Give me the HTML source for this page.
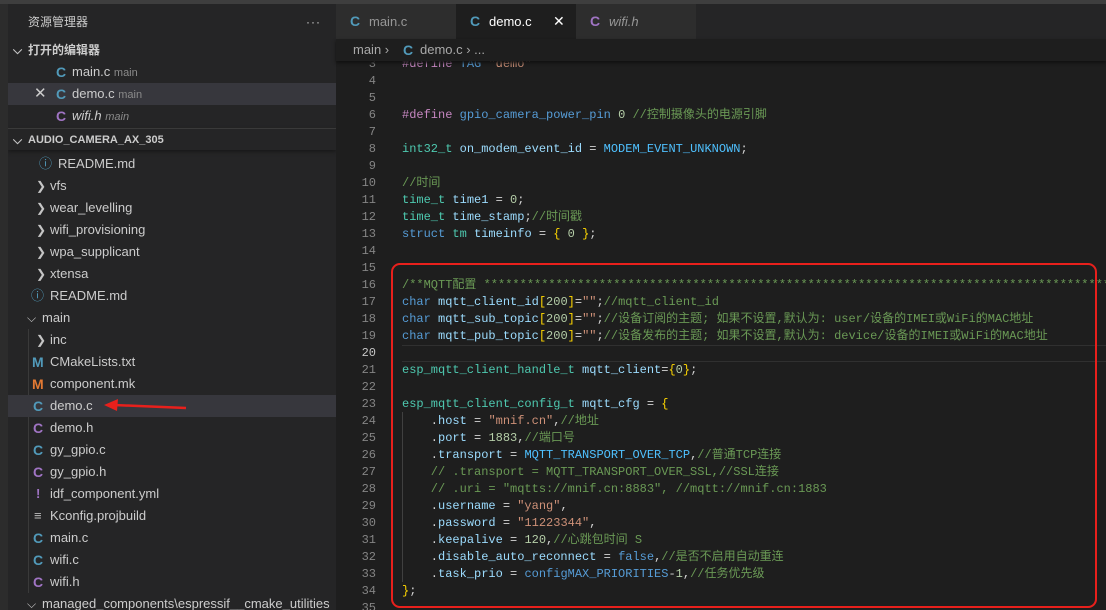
<!DOCTYPE html>
<html><head><meta charset="utf-8"><style>
*{margin:0;padding:0;box-sizing:border-box}
body{width:1106px;height:610px;overflow:hidden;background:#1e1e1e;font-family:"Liberation Sans","Noto Sans CJK SC",sans-serif;position:relative;color:#ccc}
.abs{position:absolute}
#top{left:0;top:0;width:1106px;height:4px;background:#3e3e3e}
#act{left:0;top:4px;width:8px;height:606px;background:#2c2c2c}
#side{left:8px;top:4px;width:328px;height:606px;background:#252526;overflow:hidden}
.row{position:absolute;left:0;width:328px;height:22px;line-height:22px;font-size:13px;color:#ccc;white-space:nowrap}
.row span{position:absolute}
.ci{font-weight:bold;font-size:14px;color:#519aba}
.ch{font-weight:bold;font-size:14px;color:#a074c4}
.dim{font-size:11px;color:#8b8b8b}
.chev{color:#c5c5c5;font-size:12px}
#tabs{left:336px;top:4px;width:770px;height:35px;background:#252526}
.tab{position:absolute;top:0;height:35px;width:120px;background:#2d2d2d;font-size:13px;line-height:35px;color:#969696}
.tab b{position:absolute;left:14px;font-size:14px}
.tab i,.tab em{position:absolute;left:33px}
#bc{left:336px;top:39px;width:770px;height:22px;background:#1e1e1e;box-shadow:0 2px 3px #111;z-index:2;font-size:13px;line-height:22px;color:#a9a9a9}
#code{left:336px;top:61px;width:770px;height:549px;overflow:hidden}
.l{position:absolute;left:0;height:17px;line-height:17px;font-family:"Liberation Mono","Noto Sans CJK SC",monospace;font-size:12px;white-space:pre;width:770px}
.n{position:absolute;right:730px;color:#858585;text-align:right}
.c{position:absolute;left:66px;color:#d4d4d4}
.k{color:#569cd6}.p{color:#c586c0}.t{color:#4ec9b0}.v{color:#9cdcfe}.s{color:#ce9178}.g{color:#6a9955}.num{color:#b5cea8}.m{color:#4fc1ff}.y{color:#ffd700}.f{color:#dcdcaa}
#box{left:391px;top:263px;width:706px;height:345px;border:2px solid #e8201c;border-radius:9px;z-index:3}
</style></head><body>
<div class="abs" id="top"></div>
<div class="abs" id="act"></div>
<div class="abs" id="side">
 <div class="row" style="top:7px;font-size:12px"><span style="left:20px">资源管理器</span><span style="left:298px;letter-spacing:1px">···</span></div>
 <div class="row" style="top:35px;font-weight:bold;font-size:12px"><span class="chev" style="left:5px">⌵</span><span style="left:20px">打开的编辑器</span></div>
 <div class="row" style="top:57px"><span class="ci" style="left:48px">C</span><span style="left:64px">main.c <span class="dim" style="position:static">main</span></span></div>
 <div class="row" style="top:79px;background:#37373d"><span style="left:26px;font-size:15px">✕</span><span class="ci" style="left:48px">C</span><span style="left:64px">demo.c <span class="dim" style="position:static">main</span></span></div>
 <div class="row" style="top:101px"><span class="ch" style="left:48px">C</span><span style="left:64px;font-style:italic">wifi.h <span class="dim" style="position:static">main</span></span></div>
 <div class="row" style="top:124px;font-weight:bold;font-size:11px;border-top:1px solid #3a3a3a;box-shadow:0 2px 3px #1a1a1a"><span class="chev" style="left:5px">⌵</span><span style="left:20px">AUDIO_CAMERA_AX_305</span></div>
 <div class="row" style="top:149px"><span style="left:31px;color:#519aba">ⓘ</span><span style="left:50px">README.md</span></div>
 <div class="row" style="top:171px"><span class="chev" style="left:28px">❯</span><span style="left:42px">vfs</span></div>
 <div class="row" style="top:193px"><span class="chev" style="left:28px">❯</span><span style="left:42px">wear_levelling</span></div>
 <div class="row" style="top:215px"><span class="chev" style="left:28px">❯</span><span style="left:42px">wifi_provisioning</span></div>
 <div class="row" style="top:237px"><span class="chev" style="left:28px">❯</span><span style="left:42px">wpa_supplicant</span></div>
 <div class="row" style="top:259px"><span class="chev" style="left:28px">❯</span><span style="left:42px">xtensa</span></div>
 <div class="row" style="top:281px"><span style="left:23px;color:#519aba">ⓘ</span><span style="left:42px">README.md</span></div>
 <div class="row" style="top:303px"><span class="chev" style="left:19px">⌵</span><span style="left:34px">main</span></div>
 <div class="abs" style="left:20px;top:325px;width:1px;height:264px;background:#3a3a3a"></div>
 <div class="row" style="top:325px"><span class="chev" style="left:28px">❯</span><span style="left:42px">inc</span></div>
 <div class="row" style="top:347px"><span class="ci" style="left:24px">M</span><span style="left:42px">CMakeLists.txt</span></div>
 <div class="row" style="top:369px"><span style="left:24px;font-weight:bold;font-size:14px;color:#e37933">M</span><span style="left:42px">component.mk</span></div>
 <div class="row" style="top:391px;background:#37373d"><span class="ci" style="left:25px">C</span><span style="left:42px">demo.c</span></div>
 <div class="row" style="top:413px"><span class="ch" style="left:25px">C</span><span style="left:42px">demo.h</span></div>
 <div class="row" style="top:435px"><span class="ci" style="left:25px">C</span><span style="left:42px">gy_gpio.c</span></div>
 <div class="row" style="top:457px"><span class="ch" style="left:25px">C</span><span style="left:42px">gy_gpio.h</span></div>
 <div class="row" style="top:479px"><span style="left:28px;font-weight:bold;color:#a074c4">!</span><span style="left:42px">idf_component.yml</span></div>
 <div class="row" style="top:501px"><span style="left:26px;color:#bbb">≡</span><span style="left:42px">Kconfig.projbuild</span></div>
 <div class="row" style="top:523px"><span class="ci" style="left:25px">C</span><span style="left:42px">main.c</span></div>
 <div class="row" style="top:545px"><span class="ci" style="left:25px">C</span><span style="left:42px">wifi.c</span></div>
 <div class="row" style="top:567px"><span class="ch" style="left:25px">C</span><span style="left:42px">wifi.h</span></div>
 <div class="row" style="top:589px"><span class="chev" style="left:19px">⌵</span><span style="left:34px">managed_components\espressif__cmake_utilities</span></div>
</div>
<svg class="abs" style="left:100px;top:398px;z-index:4" width="90" height="20"><line x1="86" y1="10" x2="14" y2="7" stroke="#e8201c" stroke-width="2.5"/><polygon points="4,7 18,1 17,13" fill="#e8201c"/></svg>
<div class="abs" id="tabs">
 <div class="tab" style="left:0"><b style="color:#519aba">C</b><i style="font-style:normal">main.c</i></div>
 <div class="tab" style="left:120px;background:#1e1e1e;color:#fff"><b style="color:#519aba">C</b><i style="font-style:normal;left:33px">demo.c</i><span style="position:absolute;left:97px;font-size:14px">✕</span></div>
 <div class="tab" style="left:240px"><b style="color:#a074c4">C</b><em>wifi.h</em></div>
</div>
<div class="abs" id="bc"><span style="position:absolute;left:17px">main ›</span><span style="position:absolute;left:67px;color:#519aba;font-weight:bold;font-size:14px">C</span><span style="position:absolute;left:84px">demo.c › ...</span></div>
<div class="abs" id="code">
<div class="l" style="top:-5.5px"><span class="n">3</span><span class="c"><span class="p">#define</span> <span class="k">TAG</span> <span class="s">"demo"</span></span></div>
<div class="l" style="top:11.5px"><span class="n">4</span></div>
<div class="l" style="top:28.5px"><span class="n">5</span></div>
<div class="l" style="top:45.5px"><span class="n">6</span><span class="c"><span class="p">#define</span> <span class="k">gpio_camera_power_pin</span> <span class="num">0</span> <span class="g">//控制摄像头的电源引脚</span></span></div>
<div class="l" style="top:62.5px"><span class="n">7</span></div>
<div class="l" style="top:79.5px"><span class="n">8</span><span class="c"><span class="t">int32_t</span> <span class="v">on_modem_event_id</span> = <span class="m">MODEM_EVENT_UNKNOWN</span>;</span></div>
<div class="l" style="top:96.5px"><span class="n">9</span></div>
<div class="l" style="top:113.5px"><span class="n">10</span><span class="c g">//时间</span></div>
<div class="l" style="top:130.5px"><span class="n">11</span><span class="c"><span class="t">time_t</span> <span class="v">time1</span> = <span class="num">0</span>;</span></div>
<div class="l" style="top:147.5px"><span class="n">12</span><span class="c"><span class="t">time_t</span> <span class="v">time_stamp</span>;<span class="g">//时间戳</span></span></div>
<div class="l" style="top:164.5px"><span class="n">13</span><span class="c"><span class="k">struct</span> <span class="t">tm</span> <span class="v">timeinfo</span> = <span class="y">{</span> <span class="num">0</span> <span class="y">}</span>;</span></div>
<div class="l" style="top:181.5px"><span class="n">14</span></div>
<div class="l" style="top:198.5px"><span class="n">15</span></div>
<div class="l" style="top:215.5px"><span class="n">16</span><span class="c g">/**MQTT配置 ****************************************************************************************************</span></div>
<div class="l" style="top:232.5px"><span class="n">17</span><span class="c"><span class="k">char</span> <span class="v">mqtt_client_id</span><span class="y">[</span><span class="num">200</span><span class="y">]</span>=<span class="s">""</span>;<span class="g">//mqtt_client_id</span></span></div>
<div class="l" style="top:249.5px"><span class="n">18</span><span class="c"><span class="k">char</span> <span class="v">mqtt_sub_topic</span><span class="y">[</span><span class="num">200</span><span class="y">]</span>=<span class="s">""</span>;<span class="g">//设备订阅的主题; 如果不设置,默认为: user/设备的IMEI或WiFi的MAC地址</span></span></div>
<div class="l" style="top:266.5px"><span class="n">19</span><span class="c"><span class="k">char</span> <span class="v">mqtt_pub_topic</span><span class="y">[</span><span class="num">200</span><span class="y">]</span>=<span class="s">""</span>;<span class="g">//设备发布的主题; 如果不设置,默认为: device/设备的IMEI或WiFi的MAC地址</span></span></div>
<div class="abs" style="left:66px;top:283.5px;width:704px;height:17px;border-top:1px solid #303030;border-bottom:1px solid #303030"></div>
<div class="l" style="top:283.5px"><span class="n" style="color:#c6c6c6">20</span></div>
<div class="l" style="top:300.5px"><span class="n">21</span><span class="c"><span class="t">esp_mqtt_client_handle_t</span> <span class="v">mqtt_client</span>=<span class="y">{</span><span class="num">0</span><span class="y">}</span>;</span></div>
<div class="l" style="top:317.5px"><span class="n">22</span></div>
<div class="l" style="top:334.5px"><span class="n">23</span><span class="c"><span class="t">esp_mqtt_client_config_t</span> <span class="v">mqtt_cfg</span> = <span class="y">{</span></span></div>
<div class="l" style="top:351.5px"><span class="n">24</span><span class="c">    .<span class="v">host</span> = <span class="s">"mnif.cn"</span>,<span class="g">//地址</span></span></div>
<div class="l" style="top:368.5px"><span class="n">25</span><span class="c">    .<span class="v">port</span> = <span class="num">1883</span>,<span class="g">//端口号</span></span></div>
<div class="l" style="top:385.5px"><span class="n">26</span><span class="c">    .<span class="v">transport</span> = <span class="m">MQTT_TRANSPORT_OVER_TCP</span>,<span class="g">//普通TCP连接</span></span></div>
<div class="l" style="top:402.5px"><span class="n">27</span><span class="c g">    // .transport = MQTT_TRANSPORT_OVER_SSL,//SSL连接</span></div>
<div class="l" style="top:419.5px"><span class="n">28</span><span class="c g">    // .uri = "mqtts://mnif.cn:8883", //mqtt://mnif.cn:1883</span></div>
<div class="l" style="top:436.5px"><span class="n">29</span><span class="c">    .<span class="v">username</span> = <span class="s">"yang"</span>,</span></div>
<div class="l" style="top:453.5px"><span class="n">30</span><span class="c">    .<span class="v">password</span> = <span class="s">"11223344"</span>,</span></div>
<div class="l" style="top:470.5px"><span class="n">31</span><span class="c">    .<span class="v">keepalive</span> = <span class="num">120</span>,<span class="g">//心跳包时间 S</span></span></div>
<div class="l" style="top:487.5px"><span class="n">32</span><span class="c">    .<span class="v">disable_auto_reconnect</span> = <span class="k">false</span>,<span class="g">//是否不启用自动重连</span></span></div>
<div class="l" style="top:504.5px"><span class="n">33</span><span class="c">    .<span class="v">task_prio</span> = <span class="k">configMAX_PRIORITIES</span>-<span class="num">1</span>,<span class="g">//任务优先级</span></span></div>
<div class="l" style="top:521.5px"><span class="n">34</span><span class="c"><span class="y">}</span>;</span></div>
<div class="l" style="top:538.5px"><span class="n">35</span></div>
<div class="abs" style="left:66px;top:351px;width:1px;height:170px;background:#404040"></div>
</div>
<div class="abs" id="box"></div>
</body></html>
